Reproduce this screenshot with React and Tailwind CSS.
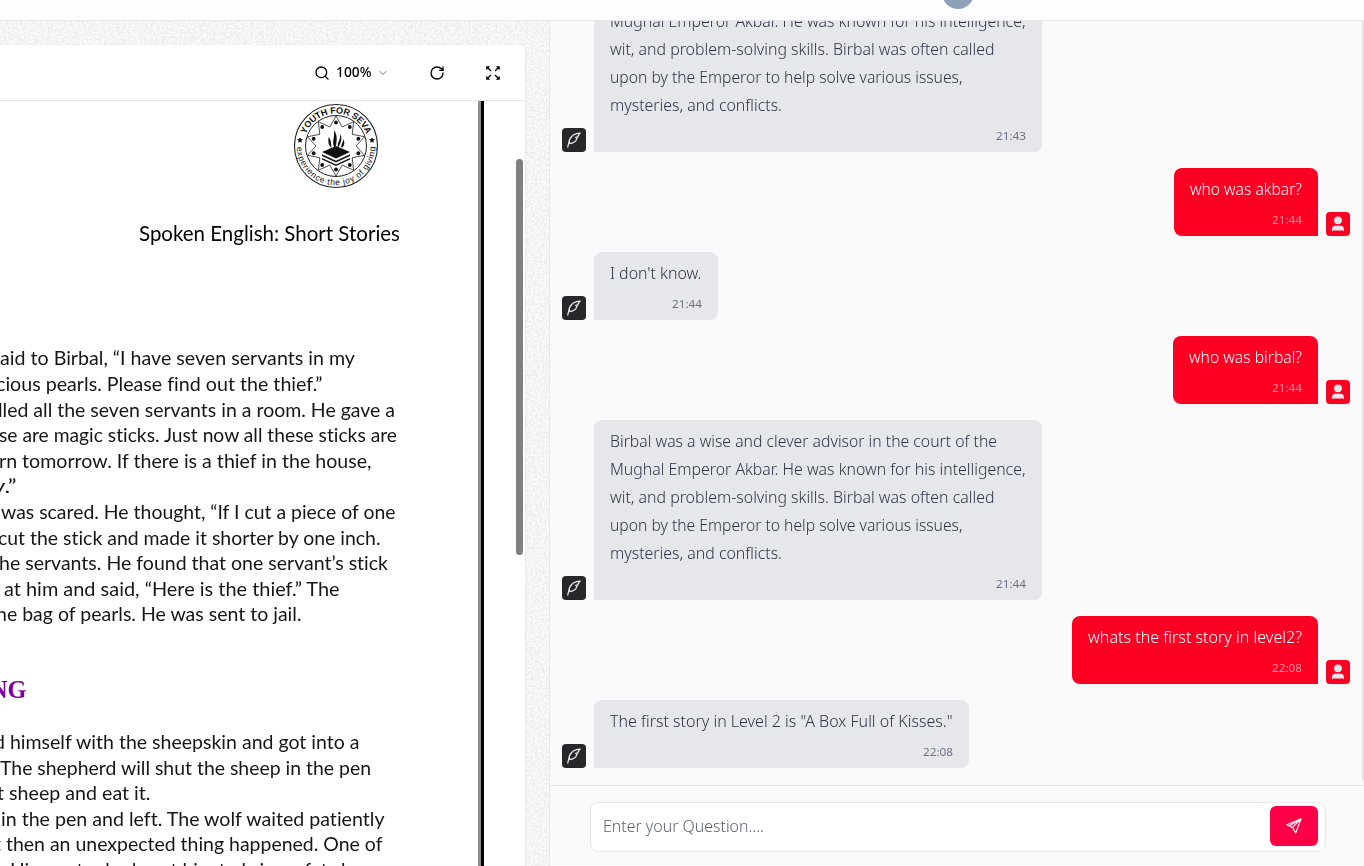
import React, { useLayoutEffect, useRef, useState } from "react";
import { ChevronDown, RotateCw, Search } from "lucide-react";

/* One line of text condensed or widened to the given width. */
function FitLine({ text, width, className = "" }) {
  const ref = useRef(null);
  const [scale, setScale] = useState(1);
  useLayoutEffect(() => {
    const natural = ref.current.getBoundingClientRect().width;
    if (natural) setScale((s) => (width / natural) * s);
  }, [text, width]);
  return (
    <span className="block" style={{ width }}>
      <span
        ref={ref}
        className={`inline-block origin-left whitespace-pre align-top ${className}`}
        style={{ transform: `scaleX(${scale})` }}
      >
        {text}
      </span>
    </span>
  );
}

function ExpandIcon() {
  return (
    <svg width="16" height="16" viewBox="0 0 16 16" fill="none" stroke="#000" strokeWidth="1.4">
      <path d="M2.500 2.500 6 6M13.500 2.500 10 6M2.500 13.500 6 10M13.500 13.500 10 10" />
      <path d="M1.200 1.200h4L1.200 5.200zM14.800 1.200h-4L14.800 5.200zM1.200 14.800h4L1.200 10.800zM14.800 14.800h-4L14.800 10.800z" fill="#000" stroke="none" />
    </svg>
  );
}

function FeatherIcon() {
  return (
    <svg width="16" height="16" viewBox="0 0 16 16" fill="none" stroke="#e5e7eb" strokeWidth="1.3" strokeLinecap="round" strokeLinejoin="round">
      <path d="M1.800 15C2 12.800 2.500 11.600 3.600 9.600" />
      <path d="M2.900 11.600C2.800 6.200 6.600 1.500 14.200 1.200 12.300 2.400 12.500 3.500 11.700 5l-2 .5 1.300.9c-.9 3.200-3.600 4.900-8.100 5.200z" />
    </svg>
  );
}

function PersonIcon() {
  return (
    <svg width="16" height="16" viewBox="0 0 16 16" fill="#e5e7eb">
      <circle cx="8" cy="4.300" r="3.900" />
      <path d="M2 15.300v-2.100C2 11 3.400 9.700 5.300 9.700h5.400c1.900 0 3.300 1.300 3.300 3.500v2.100l-1-.7H3z" />
    </svg>
  );
}

function PlaneIcon() {
  return (
    <svg width="16" height="16" viewBox="0 0 16 16" fill="none" stroke="#fff" strokeWidth="1.100" strokeLinejoin="round">
      <path d="M15 1 .8 6.700l5.600 2.700L9.700 15z" />
      <path d="M15 1 6.400 9.400M15 1 3.400 7.800" />
    </svg>
  );
}

function SevaLogo() {
  const points = Array.from({ length: 20 }, (_, i) => {
    const a = (i * Math.PI) / 10 - Math.PI / 2;
    const r = i % 2 ? 20 : 30;
    return `${43 + r * Math.cos(a)},${43 + r * Math.sin(a)}`;
  }).join(" ");
  const heads = Array.from({ length: 10 }, (_, i) => {
    const a = (i * Math.PI) / 5 - Math.PI / 2;
    return [43 + 23.5 * Math.cos(a), 43 + 23.5 * Math.sin(a)];
  });
  return (
    <svg width="86" height="86" viewBox="0 0 86 86" fill="none" stroke="#222">
      <defs>
        <path id="arcTop" d="M10.500 43a32.500 32.500 0 0 1 65 0" />
        <path id="arcBottom" d="M3.800 43a39.200 39.200 0 0 0 78.400 0" />
      </defs>
      <circle cx="43" cy="43" r="41.500" strokeWidth="1.100" />
      <circle cx="43" cy="43" r="30.500" strokeWidth="1" />
      <polygon points={points} strokeWidth=".8" />
      {heads.map(([x, y], i) => (
        <circle key={i} cx={x} cy={y} r="1.900" fill="#111" stroke="none" />
      ))}
      <g fill="#111" stroke="none">
        <path d="m43 43 14 6-14 6.500-14-6.500z" />
        <path d="m29 51.200 14 6.500 14-6.500v1.900l-14 6.500-14-6.500z" />
        <path d="m29 55 14 6.500 14-6.500v1.500l-14 6.500-14-6.500z" />
        <path d="M38.500 45c-4-4-3-6-3-11 3 3 2.500 7 3 11zM42 46c-4-7 0-10-1-19 4 6 3 12 1 19zM45 45c-1.500-6 3-7 2-14 3 5 .5 9-2 14zM49 45c-2-3 1.500-5 1-9 2.500 4 1 7-1 9z" />
        <path d="m7 34.200.9 1.900 2.100.2-1.600 1.400.5 2-1.900-1-1.900 1 .5-2L4 36.300l2.100-.2zM79 34.200l.9 1.900 2.100.2-1.600 1.400.5 2-1.900-1-1.900 1 .5-2-1.600-1.400 2.100-.2z" />
        <text className="font-['Liberation_Sans'] text-[9px] font-bold">
          <textPath href="#arcTop" startOffset="12" textLength="78">YOUTH FOR SEVA</textPath>
        </text>
        <text className="font-['Liberation_Sans'] text-[8.5px]">
          <textPath href="#arcBottom" startOffset="1" textLength="121">experience the joy of giving</textPath>
        </text>
      </g>
    </svg>
  );
}

const storyOne = [
  ["aid to Birbal, “I have seven servants in my", 0, 355],
  ["cious pearls. Please find out the thief.”", -4, 322.5],
  ["lled all the seven servants in a room. He gave a", -2, 395],
  ["se are magic sticks. Just now all these sticks are", -1, 397],
  ["rn tomorrow. If there is a thief in the house,", -1, 371.5],
  ["y.”", -7, 16.5],
  ["was scared. He thought, “If I cut a piece of one", 0.5, 395],
  ["cut the stick and made it shorter by one inch.", -2, 380.5],
  ["he servants. He found that one servant’s stick", -1, 388],
  ["at him and said, “Here is the thief.” The", 4, 339.5],
  ["he bag of pearls. He was sent to jail.", -4, 301.5],
];
const storyTwo = [
  ["d himself with the sheepskin and got into a", -6, 359.5],
  ["The shepherd will shut the sheep in the pen", -0.5, 370.5],
  ["t sheep and eat it.", -3, 150.5],
  ["in the pen and left. The wolf waited patiently", 1, 384.5],
  ["t then an unexpected thing happened. One of", -6, 382.5],
  ["His master had sent him to bring a fat sheep", 10, 383],
];

function Story({ lines }) {
  return (
    <div className="font-['Lato','Liberation_Sans',sans-serif] text-[19px] leading-[25.6px] text-[#161616] [font-variant-ligatures:none]">
      {lines.map(([text, start, end]) => (
        <div key={text} style={{ marginLeft: start }}>
          <FitLine text={text} width={end - start} />
        </div>
      ))}
    </div>
  );
}

const birbal = [
  ["Birbal was a wise and clever advisor in the court of the", 387],
  ["Mughal Emperor Akbar. He was known for his intelligence,", 415.5],
  ["wit, and problem-solving skills. Birbal was often called", 384.5],
  ["upon by the Emperor to help solve various issues,", 352.5],
  ["mysteries, and conflicts.", 172],
];
const messages = [
  { lines: birbal, time: "21:43" },
  { mine: true, lines: [["who was akbar?", 112]], time: "21:44" },
  { lines: [["I don't know.", 91.5]], time: "21:44" },
  { mine: true, lines: [["who was birbal?", 113]], time: "21:44" },
  { lines: birbal, time: "21:44" },
  { mine: true, lines: [["whats the first story in level2?", 214]], time: "22:08" },
  { lines: [['The first story in Level 2 is "A Box Full of Kisses."', 342.5]], time: "22:08" },
];

function Message({ mine, lines, time }) {
  return (
    <div className={`flex shrink-0 items-end gap-2 ${mine ? "flex-row-reverse" : ""}`}>
      <div className={`flex size-6 items-center justify-center rounded ${mine ? "bg-[#fb0022]" : "bg-[#262729]"}`}>
        {mine ? <PersonIcon /> : <FeatherIcon />}
      </div>
      <div
        className={`flex flex-col rounded-lg pt-[7px] pb-1.5 ${
          mine
            ? "rounded-br-none bg-[#fb0022] px-4 text-white"
            : "rounded-bl-none bg-gray-200 pr-[16.1px] pl-[16.4px] text-[#2c3644]"
        }`}
      >
        <div className="text-base leading-7 font-light">
          {lines.map(([text, width]) => (
            <FitLine key={text} text={text} width={width} />
          ))}
        </div>
        <div className={`mt-[7px] h-5 self-end text-[11.5px] leading-5 ${mine ? "text-[#fd8d9c]" : "text-gray-500"}`}>
          <FitLine text={time} width={30} />
        </div>
      </div>
    </div>
  );
}

export default function App() {
  return (
    <div className="flex h-[866px] w-[1364px] flex-col overflow-hidden bg-[#fafafa] font-['Noto_Sans','Open_Sans',sans-serif]">
      <header className="relative h-[21px] shrink-0 border-b border-gray-200 bg-[#fdfdfd]">
        <div className="absolute top-[-23px] left-[942px] size-8 rounded-full bg-[#8fa1b9]" />
      </header>
      <div className="flex min-h-0 flex-1">
        <section className="relative w-[550px] shrink-0 overflow-hidden border-r border-gray-200 bg-[#fafafa] pt-6">
          <svg className="absolute inset-0 size-full" aria-hidden="true">
            <filter id="paper" colorInterpolationFilters="sRGB">
              <feTurbulence type="fractalNoise" baseFrequency=".45" numOctaves="2" seed="4" />
              <feColorMatrix values="0 0 0 0 .92  0 0 0 0 .92  0 0 0 0 .92  4 0 0 0 -1.6" />
            </filter>
            <rect width="100%" height="100%" filter="url(#paper)" opacity=".85" />
          </svg>
          <div className="relative flex h-full w-[525px] flex-col rounded-tr-md bg-white shadow-sm">
            <div className="flex h-14 shrink-0 items-center border-b border-gray-200 pl-[314px]">
              <Search className="size-4 text-black" strokeWidth={2} />
              <span className="mb-px ml-1.5 w-9 text-sm font-medium text-black">
                <FitLine text="100%" width={35.5} />
              </span>
              <ChevronDown className="ml-[5px] size-3 text-gray-500" strokeWidth={2} />
              <RotateCw className="ml-10 size-4 text-black" strokeWidth={2} />
              <div className="ml-10">
                <ExpandIcon />
              </div>
            </div>
            <div className="flex min-h-0 flex-1 overflow-hidden">
              <div className="h-full w-[484px] shrink-0 border-r-[3px] border-black">
                <div className="h-full overflow-hidden border-r-[3px] border-[#8b8b8b]">
                  <div className="ml-[293px] h-[86px] w-[86px] pt-[2px]">
                    <SevaLogo />
                  </div>
                  <div className="mt-[30px] ml-[139px] h-8 font-['Lato','Liberation_Sans',sans-serif] text-[21px] leading-8 text-black">
                    <FitLine text="Spoken English: Short Stories" width={261} />
                  </div>
                  <div className="pt-[96.4px]">
                    <Story lines={storyOne} />
                  </div>
                  <div className="mt-[48px] ml-[-10px] h-[31px] font-['Liberation_Serif','Times_New_Roman',serif] text-[25px] leading-[30px] font-bold text-[#8000a0]">
                    <FitLine text="NG" width={36.5} />
                  </div>
                  <div className="mt-[23.2px]">
                    <Story lines={storyTwo} />
                  </div>
                </div>
              </div>
              <div className="mt-[58px] ml-8 h-[396px] w-[7px] rounded-full bg-[#808080]" />
            </div>
          </div>
        </section>
        <section className="flex min-w-0 flex-1 flex-col">
          <div className="flex min-h-0 flex-1 justify-between">
            <div className="flex min-w-0 flex-1 flex-col justify-end gap-4 overflow-hidden pr-3 pb-[17px] pl-3">
              {messages.map((m, i) => (
                <Message key={i} {...m} />
              ))}
            </div>
            <div className="mb-[5px] w-0.5 bg-[#e1e1e3]" />
          </div>
          <div className="h-[81px] shrink-0 border-t border-gray-200 pt-4 pl-10">
            <div className="flex h-[50px] w-[736px] items-start justify-between rounded-lg border border-gray-200 bg-white pt-[3px] pr-[7px] pl-3">
              <div className="text-base leading-10 font-light text-[#5c6370]">
                <FitLine text="Enter your Question...." width={161} />
              </div>
              <button className="flex h-10 w-12 items-center justify-center rounded-md bg-[#fe0045]">
                <PlaneIcon />
              </button>
            </div>
          </div>
        </section>
      </div>
    </div>
  );
}
